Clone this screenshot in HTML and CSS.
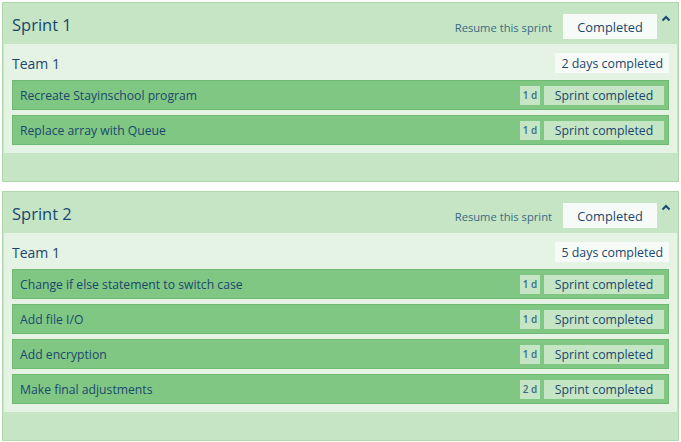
FILE: index.html
```html
<!DOCTYPE html>
<html>
<head>
<meta charset="utf-8">
<link rel="stylesheet" href="styles.css">
</head>
<body>
<div class="page">
  <section class="sprint">
    <header class="sprint-head">
      <h2 class="sprint-title">Sprint 1</h2>
      <div class="sprint-actions">
        <span class="resume">Resume this sprint</span>
        <span class="status-btn">Completed</span>
        <svg class="chevron" width="10" height="7" viewBox="0 0 10 7"><polyline points="1.5,5.5 5,2 8.5,5.5" fill="none" stroke="#1c4a72" stroke-width="2"/></svg>
      </div>
    </header>
    <div class="team">
      <div class="team-head">
        <h3 class="team-title">Team 1</h3>
        <span class="days">2 days completed</span>
      </div>
      <div class="task"><span class="task-name">Recreate Stayinschool program</span><span class="dur">1 d</span><span class="task-status">Sprint completed</span></div>
      <div class="task"><span class="task-name">Replace array with Queue</span><span class="dur">1 d</span><span class="task-status">Sprint completed</span></div>
    </div>
    <div class="sprint-foot"></div>
  </section>
  <section class="sprint">
    <header class="sprint-head">
      <h2 class="sprint-title">Sprint 2</h2>
      <div class="sprint-actions">
        <span class="resume">Resume this sprint</span>
        <span class="status-btn">Completed</span>
        <svg class="chevron" width="10" height="7" viewBox="0 0 10 7"><polyline points="1.5,5.5 5,2 8.5,5.5" fill="none" stroke="#1c4a72" stroke-width="2"/></svg>
      </div>
    </header>
    <div class="team">
      <div class="team-head">
        <h3 class="team-title">Team 1</h3>
        <span class="days">5 days completed</span>
      </div>
      <div class="task"><span class="task-name">Change if else statement to switch case</span><span class="dur">1 d</span><span class="task-status">Sprint completed</span></div>
      <div class="task"><span class="task-name">Add file I/O</span><span class="dur">1 d</span><span class="task-status">Sprint completed</span></div>
      <div class="task"><span class="task-name">Add encryption</span><span class="dur">1 d</span><span class="task-status">Sprint completed</span></div>
      <div class="task"><span class="task-name">Make final adjustments</span><span class="dur">2 d</span><span class="task-status">Sprint completed</span></div>
    </div>
    <div class="sprint-foot"></div>
  </section>
</div>
</body>
</html>
```

FILE: styles.css
```css
* { box-sizing: border-box; }
html, body { margin: 0; padding: 0; background: #ffffff; }
body { font-family: "Open Sans", "Noto Sans", sans-serif; color: #1b476d; font-weight: 500; }
.page { padding: 2px 2px 0 2px; display: flex; flex-direction: column; gap: 9px; }
.sprint { background: #c5e5c5; border: 1px solid #acd8ac; padding: 0 1px; display: flex; flex-direction: column; }
.sprint-head { height: 41px; display: flex; align-items: center; justify-content: space-between; padding: 0 6px 0 8px; }
.sprint-title { margin: 0; font-size: 16.5px; font-weight: 500; line-height: 22px; position: relative; top: 1px; }
.sprint-actions { display: flex; align-items: center; align-self: stretch; padding-top: 11px; padding-bottom: 5px; }
.resume { font-size: 11.2px; color: #3a6b84; margin-right: 11px; margin-top: 1px; font-weight: 400; }
.status-btn { background: #f7fbf7; font-size: 12.8px; width: 94px; height: 25px; display: flex; align-items: center; justify-content: center; }
.chevron { align-self: flex-start; margin-left: 4px; margin-top: 1px; }
.team { background: #e4f3e4; padding: 9px 8px 8px 8px; display: flex; flex-direction: column; gap: 5px; }
.team-head { display: flex; align-items: center; justify-content: space-between; height: 20px; margin-bottom: 2px; }
.team-title { margin: 0; font-size: 14px; font-weight: 500; }
.days { background: #f7fbf7; font-size: 12.4px; height: 20px; padding: 0 6px; display: flex; align-items: center; }
.task { height: 30px; background: #80c784; border: 1px solid #6dba70; display: flex; align-items: center; padding: 0 4px 0 7px; }
.task-name { flex: 1; font-size: 12.2px; }
.dur { background: #c5e5c5; font-size: 10px; font-weight: 600; height: 19px; width: 20px; display: flex; align-items: center; justify-content: center; margin-right: 4px; color: #3a6b84; }
.task-status { background: #c5e5c5; font-size: 12.3px; height: 19px; width: 120px; display: flex; align-items: center; justify-content: center; }
.sprint-foot { height: 28px; }
```
